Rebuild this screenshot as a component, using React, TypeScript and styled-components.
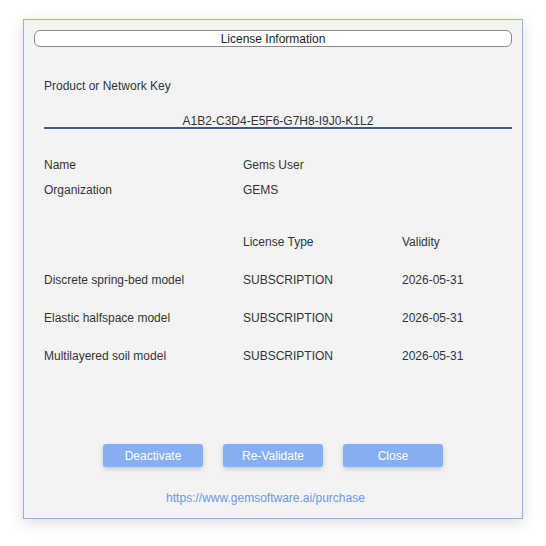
import styled, { createGlobalStyle } from "styled-components";

const GlobalStyle = createGlobalStyle`
  html, body {
    margin: 0;
    padding: 0;
    background: #ffffff;
  }
  body {
    font-family: "Liberation Sans", Arial, sans-serif;
    font-size: 12px;
    color: #333333;
  }
`;

const Page = styled.div`
  padding: 19px 0 0 23px;
  width: 546px;
  height: 546px;
  box-sizing: border-box;
`;

const Dialog = styled.div`
  width: 500px;
  height: 500px;
  box-sizing: border-box;
  border: 1px solid #8db2ee;
  background: #f3f3f3;
  box-shadow: 0 4px 14px rgba(0, 0, 0, 0.14);
  padding: 10px 10px 0 10px;
  display: flex;
  flex-direction: column;
`;

const TitleBar = styled.div`
  height: 17px;
  box-sizing: border-box;
  border: 1px solid #8a8a8a;
  border-radius: 6px;
  background: #ffffff;
  text-align: center;
  padding-top: 1px;
  line-height: 15px;
  font-size: 12px;
  color: #222222;
`;

const Content = styled.div`
  padding: 31px 0 0 10px;
  display: flex;
  flex-direction: column;
`;

const Label = styled.div`
  line-height: 16px;
`;

const KeyField = styled.div`
  padding-top: 21px;
  line-height: 12px;
  text-align: center;
  border-bottom: 2px solid #3f55a8;
  color: #333333;
`;

const InfoGrid = styled.div<{ $rowGap: number; $top: number }>`
  display: grid;
  grid-template-columns: 199px 159px 1fr;
  row-gap: ${(p) => p.$rowGap}px;
  margin-top: ${(p) => p.$top}px;
  line-height: 16px;
`;

const Cell = styled.div`
  white-space: nowrap;
`;

const Buttons = styled.div`
  margin-top: auto;
  display: flex;
  justify-content: center;
  gap: 20px;
`;

const Button = styled.button`
  width: 100px;
  height: 23px;
  border: none;
  border-radius: 3px;
  background: #86aef3;
  color: #ffffff;
  font-family: "Liberation Sans", Arial, sans-serif;
  font-size: 12px;
  box-shadow: 0 2px 5px rgba(0, 0, 0, 0.18);
  cursor: pointer;
  padding: 0;
`;

const Footer = styled.div`
  padding: 24px 15px 0 0;
  height: 51px;
  box-sizing: border-box;
  text-align: center;
  line-height: 14px;
`;

const Link = styled.a`
  color: #6d98e6;
  text-decoration: none;
  font-size: 12px;
`;

const modules = [
  "Discrete spring-bed model",
  "Elastic halfspace model",
  "Multilayered soil model",
];

export default function App() {
  return (
    <>
      <GlobalStyle />
      <Page>
        <Dialog>
          <TitleBar>License Information</TitleBar>
          <Content>
            <Label>Product or Network Key</Label>
            <KeyField>A1B2-C3D4-E5F6-G7H8-I9J0-K1L2</KeyField>
            <InfoGrid $rowGap={9} $top={28}>
              <Cell>Name</Cell>
              <Cell>Gems User</Cell>
              <Cell />
              <Cell>Organization</Cell>
              <Cell>GEMS</Cell>
              <Cell />
            </InfoGrid>
            <InfoGrid $rowGap={22} $top={36}>
              <Cell />
              <Cell>License Type</Cell>
              <Cell>Validity</Cell>
              {modules.map((m) => (
                <>
                  <Cell key={m}>{m}</Cell>
                  <Cell>SUBSCRIPTION</Cell>
                  <Cell>2026-05-31</Cell>
                </>
              ))}
            </InfoGrid>
          </Content>
          <Buttons>
            <Button>Deactivate</Button>
            <Button>Re-Validate</Button>
            <Button>Close</Button>
          </Buttons>
          <Footer>
            <Link href="#">https://www.gemsoftware.ai/purchase</Link>
          </Footer>
        </Dialog>
      </Page>
    </>
  );
}
